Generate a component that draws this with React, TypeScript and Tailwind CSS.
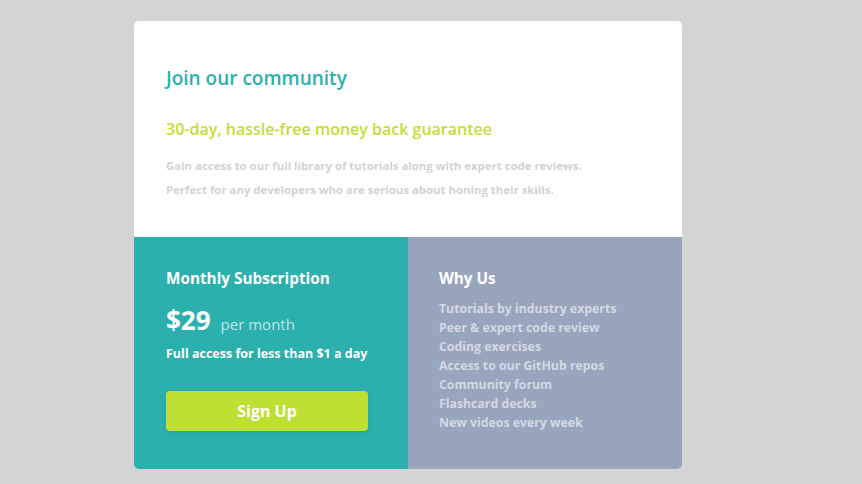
export default function App() {
  const perks = [
    "Tutorials by industry experts",
    "Peer & expert code review",
    "Coding exercises",
    "Access to our GitHub repos",
    "Community forum",
    "Flashcard decks",
    "New videos every week",
  ]

  return (
    <div className="min-h-[484px] bg-[#d4d4d4] pt-[21px] pl-[134px] font-['Open_Sans',sans-serif]">
      <div className="w-[548px] overflow-hidden rounded-[5px]">
        <section className="h-[216px] bg-white pl-8 pt-[44px]">
          <h1 className="text-[19px] font-semibold leading-[26px] text-[#2bb0ae]">Join our community</h1>
          <h2 className="mt-[28px] text-[16px] font-semibold leading-[20px] text-[#bfdf33]">
            30-day, hassle-free money back guarantee
          </h2>
          <p className="mt-[15px] text-[11.4px] font-bold leading-[24px] text-[#d2d2d6]">
            Gain access to our full library of tutorials along with expert code reviews.
            <br />
            Perfect for any developers who are serious about honing their skills.
          </p>
        </section>
        <div className="flex h-[232px]">
          <section className="w-1/2 bg-[#2bb0ae] pl-8 pt-[31px] text-white">
            <h3 className="text-[15.3px] font-bold leading-[20px]">Monthly Subscription</h3>
            <div className="mt-[16px] flex items-baseline gap-[10px]">
              <span className="text-[26px] font-bold leading-[32px]">$29</span>
              <span className="text-[15px] text-white/70">per month</span>
            </div>
            <p className="mt-[9px] text-[12.5px] font-bold leading-[18px]">Full access for less than $1 a day</p>
            <button className="mt-[28px] h-[40px] w-[202px] rounded-[4px] bg-[#bfe033] text-[16px] font-bold text-white shadow-[0_2px_4px_rgba(0,0,0,0.08)]">
              Sign Up
            </button>
          </section>
          <section className="w-1/2 bg-[#98a6bd] pl-[31px] pt-[31px]">
            <h3 className="text-[15.3px] font-bold leading-[20px] text-white">Why Us</h3>
            <ul className="mt-[11px] text-[12.3px] font-bold leading-[19px] text-[#d3d9e2]">
              {perks.map((p) => (
                <li key={p}>{p}</li>
              ))}
            </ul>
          </section>
        </div>
      </div>
    </div>
  )
}
